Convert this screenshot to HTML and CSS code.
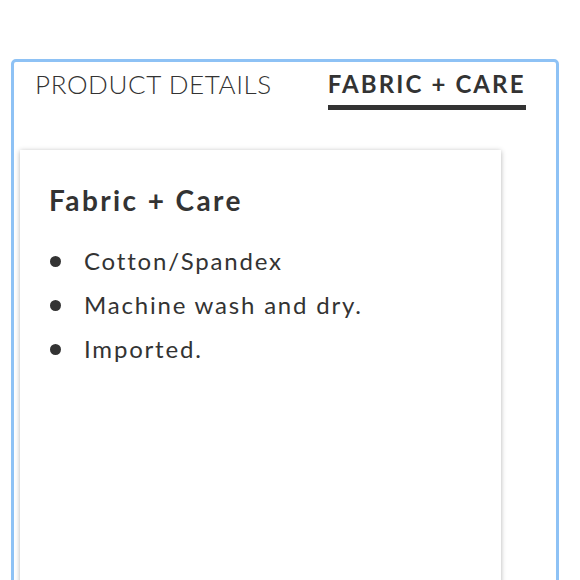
FILE: index.html
```html
<!DOCTYPE html>
<html>
<head>
<meta charset="utf-8">
<link rel="stylesheet" href="styles.css">
</head>
<body>
<div class="panel">
  <div class="tabs">
    <div class="tab">PRODUCT DETAILS</div>
    <div class="tab active">FABRIC + CARE</div>
  </div>
  <div class="card">
    <h2 class="title">Fabric + Care</h2>
    <ul class="list">
      <li>Cotton/Spandex</li>
      <li>Machine wash and dry.</li>
      <li>Imported.</li>
    </ul>
  </div>
</div>
</body>
</html>
```
FILE: styles.css
```css
html, body { margin: 0; padding: 0; background: #fff; }
body { font-family: Lato, "Noto Sans", sans-serif; color: #333; overflow: hidden; height: 580px; }
.panel {
  margin: 59px 0 0 11px;
  width: 536px;
  height: 700px;
  border: 3px solid #8ec2f5;
  border-radius: 5px;
  padding: 0 0 0 6px;
  box-sizing: content-box;
}
.tabs {
  display: flex;
  align-items: flex-start;
  padding: 7px 0 0 15px;
  height: 88px;
  box-sizing: border-box;
}
.tab {
  font-size: 26px;
  font-weight: 300;
  letter-spacing: 0.6px;
  color: #333;
  line-height: 30px;
}
.tab.active {
  margin-left: 56px;
  font-size: 24px;
  font-weight: 700;
  letter-spacing: 2.1px;
  color: #333;
  border-bottom: 5px solid #333;
  padding-bottom: 6px;
}
.card {
  width: 481px;
  height: 600px;
  box-shadow: 0 1px 5px rgba(0,0,0,0.3);
  padding: 33px 29px;
  box-sizing: border-box;
}
.title {
  margin: 0;
  font-size: 28px;
  font-weight: 700;
  letter-spacing: 2.4px;
  line-height: 34px;
  color: #333;
}
.list {
  list-style: none;
  margin: 22px 0 0;
  padding: 0;
  font-size: 24px;
  font-weight: 400;
  letter-spacing: 1.8px;
  line-height: 44px;
}
.list li {
  display: flex;
  align-items: center;
}
.list li::before {
  content: "";
  width: 11px;
  height: 11px;
  border-radius: 50%;
  background: #333;
  margin: 0 23px 0 1px;
  flex: none;
}
```
